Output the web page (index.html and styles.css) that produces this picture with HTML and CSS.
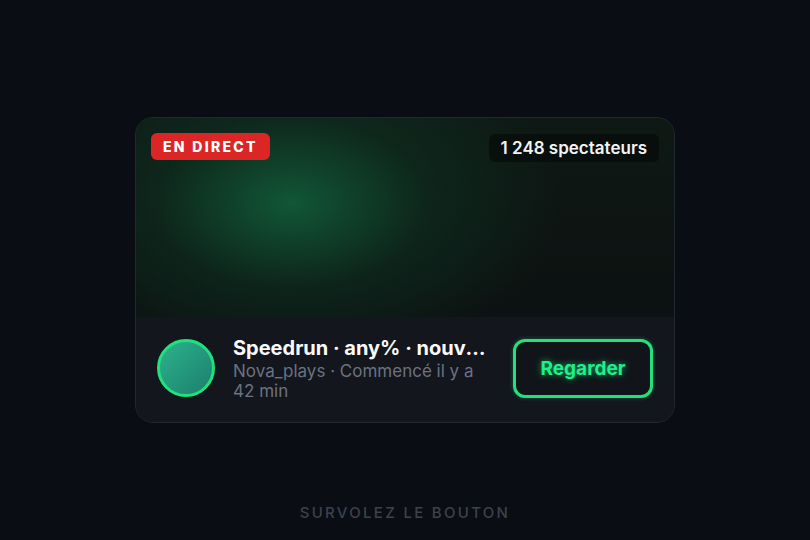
FILE: index.html
```html
<!DOCTYPE html>
<html lang="fr">
<head>
<meta charset="utf-8">
<link rel="stylesheet" href="styles.css">
</head>
<body>
<main class="stage">
  <article class="card">
    <div class="media">
      <span class="live">EN DIRECT</span>
      <span class="viewers">1 248 spectateurs</span>
    </div>
    <div class="info">
      <div class="avatar"></div>
      <div class="text">
        <div class="title">Speedrun · any% · nouveau record ?</div>
        <div class="sub">Nova_plays · Commencé il y a 42 min</div>
      </div>
      <button class="watch">Regarder</button>
    </div>
  </article>
  <p class="hint">SURVOLEZ LE BOUTON</p>
</main>
</body>
</html>
```

FILE: styles.css
```css
* { box-sizing: border-box; }
html, body { margin: 0; height: 100%; }
body {
  background: #0b0d14;
  font-family: Inter, "Noto Sans", sans-serif;
  color: #fff;
}
.stage {
  height: 100%;
  display: grid;
  grid-template-rows: 1fr auto 1fr;
  justify-items: center;
}
.card {
  grid-row: 2;
  width: 540px;
  border-radius: 18px;
  overflow: hidden;
  background: #13161d;
  border: 1px solid #23272f;
}
.media {
  height: 199px;
  background:
    radial-gradient(ellipse 270px 170px at 155px 85px, rgba(18,98,60,0.85), rgba(14,62,40,0.4) 50%, rgba(0,0,0,0) 100%),
    linear-gradient(180deg, #0e1914 0%, #0c1111 100%);
  display: flex;
  justify-content: space-between;
  align-items: flex-start;
  padding: 15px 15px 0 15px;
}
.live {
  background: #dc2626;
  color: #fff;
  font-weight: 800;
  font-size: 14px;
  letter-spacing: 2.3px;
  padding: 6px 12px 6px 12px;
  border-radius: 6px;
  line-height: 15px;
}
.viewers {
  background: rgba(5,8,8,0.6);
  color: #f1f3f5;
  font-weight: 600;
  font-size: 17px;
  padding: 4px 12px;
  line-height: 20px;
  border-radius: 6px;
  margin-top: 1px;
}
.info {
  height: 105px;
  display: flex;
  align-items: center;
  gap: 18px;
  padding: 0 21px;
  background: #13161d;
}
.avatar {
  flex: none;
  width: 58px;
  height: 58px;
  border-radius: 50%;
  border: 3px solid #22e07e;
  background: linear-gradient(135deg, #2bb38c 0%, #1d7f6e 100%);
  margin-top: -3px;
}
.text {
  flex: 1;
  min-width: 0;
  margin-top: -3px;
}
.title {
  font-weight: 700;
  font-size: 20px;
  line-height: 24px;
  white-space: nowrap;
  overflow: hidden;
  text-overflow: ellipsis;
  color: #fafafa;
}
.sub {
  font-size: 17px;
  line-height: 20px;
  color: #6b7280;
  margin-top: 1px;
}
.watch {
  flex: none;
  width: 140px;
  height: 59px;
  margin-top: -3px;
  border: 3px solid #22e07e;
  border-radius: 12px;
  background: #11151a;
  color: #1ff08a;
  font-family: Inter, "Noto Sans", sans-serif;
  font-weight: 700;
  font-size: 19px;
  text-shadow: 0 0 6px rgba(34,230,133,0.7);
  box-shadow: 0 0 4px rgba(34,224,126,0.35);
  cursor: pointer;
}
.hint {
  grid-row: 3;
  align-self: end;
  margin: 0 0 18px 0;
  font-size: 15px;
  letter-spacing: 2.3px;
  color: #3d424b;
  font-weight: 500;
}
```
